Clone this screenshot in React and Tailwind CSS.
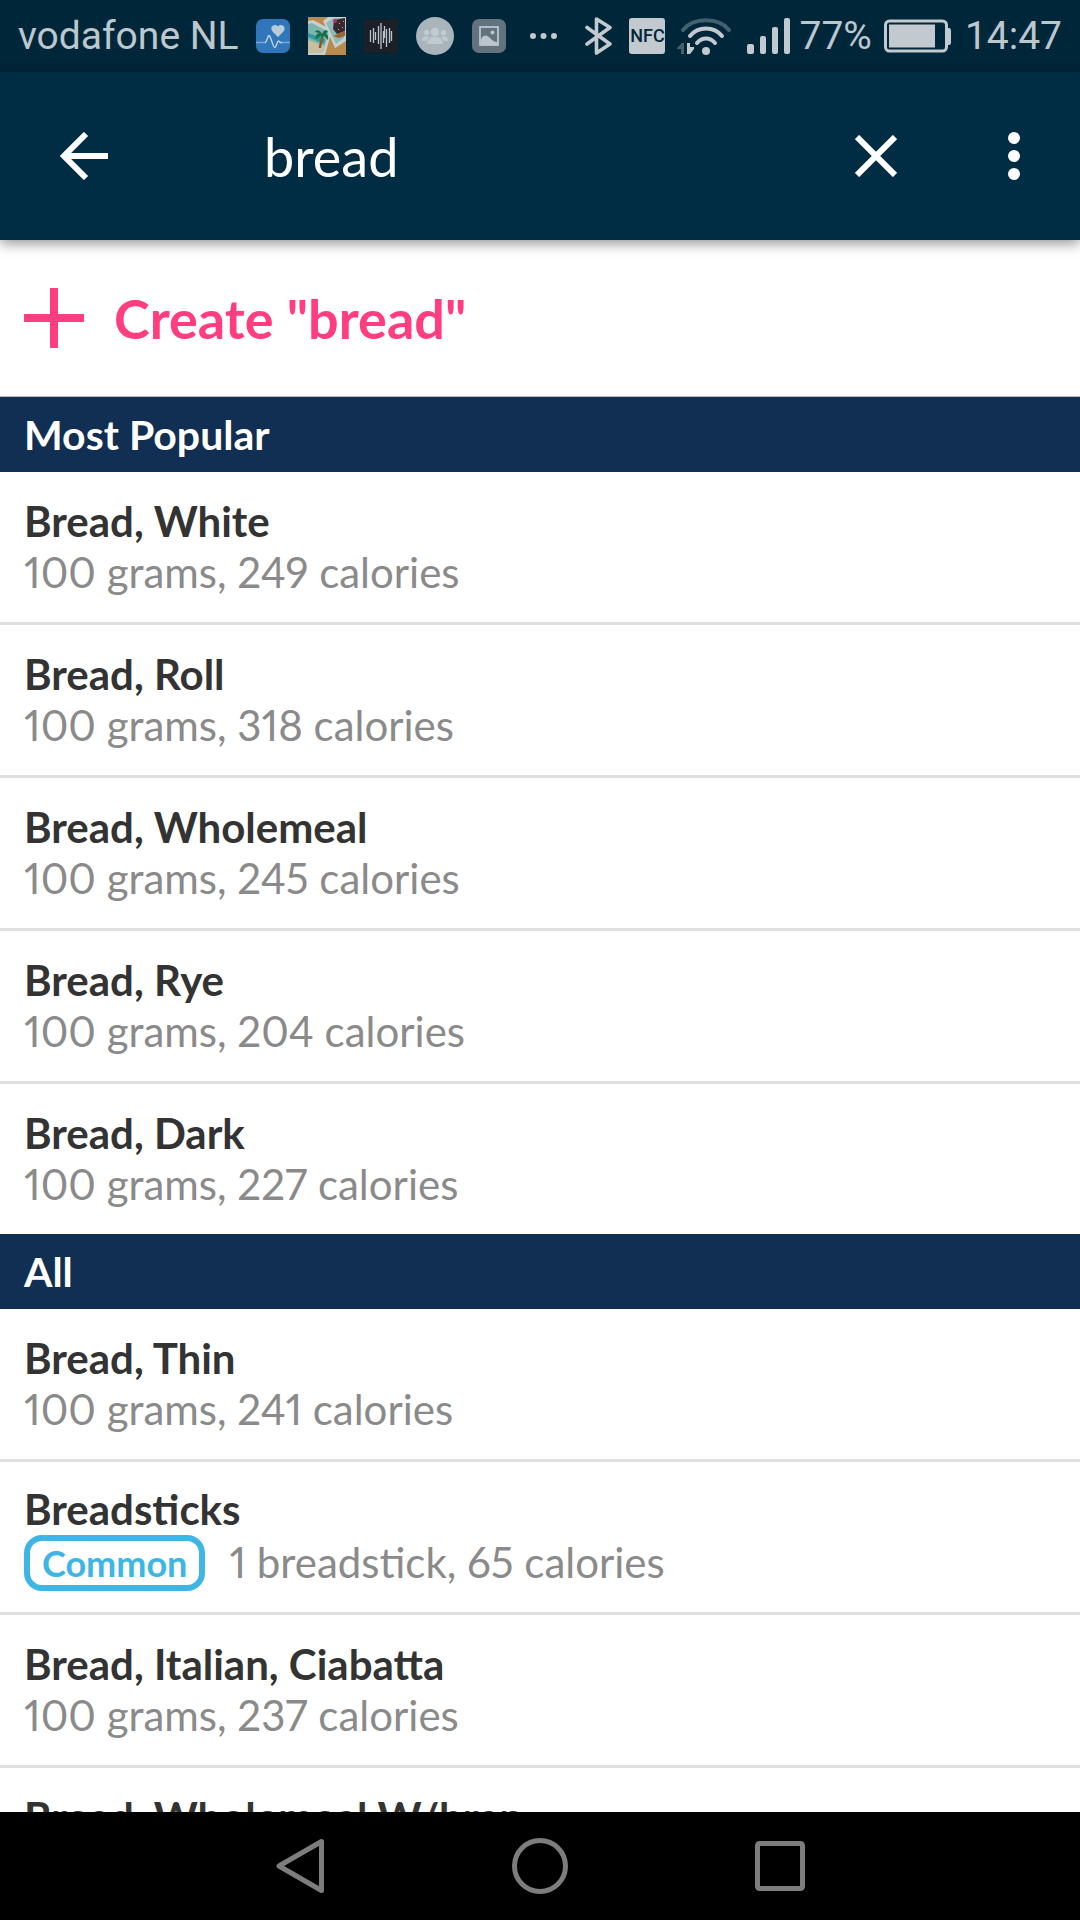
import { useState } from "react";

const popular = [
	{ id: 1, name: "Bread, White", info: "100 grams, 249 calories" },
	{ id: 2, name: "Bread, Roll", info: "100 grams, 318 calories" },
	{ id: 3, name: "Bread, Wholemeal", info: "100 grams, 245 calories" },
	{ id: 4, name: "Bread, Rye", info: "100 grams, 204 calories" },
	{ id: 5, name: "Bread, Dark", info: "100 grams, 227 calories" },
];

const all = [
	{ id: 6, name: "Bread, Thin", info: "100 grams, 241 calories" },
	{ id: 7, name: "Breadsticks", info: "1 breadstick, 65 calories", common: true },
	{ id: 8, name: "Bread, Italian, Ciabatta", info: "100 grams, 237 calories" },
	{ id: 9, name: "Bread, Wholemeal W/bran", info: "100 grams, 233 calories" },
];

function NotificationIcons() {
	return (
		<div className="flex items-center gap-[18px]">
			<svg width="34" height="34" viewBox="0 0 34 34">
				<rect width="34" height="34" rx="7" fill="#2f76bb" />
				<path d="M22 18 L16.500 12.500 C13 8 18.500 3.500 22 7.500 C25.500 3.500 31 8 27.500 12.500 Z" fill="#b9cbd6" />
				<path d="M0 23.500 H10" stroke="#7aa9d4" strokeWidth="1.500" />
				<path d="M25 23.500 H34" stroke="#7aa9d4" strokeWidth="1.500" />
				<path d="M9 23.500 C11 23 12 16 13 16.500 C15 17 17 29 19 28.500 C20.500 28 21 22 22.500 22 C23.500 22 24 24.500 26 23.500" fill="none" stroke="#c8d8e2" strokeWidth="1.300" />
			</svg>
			<svg width="38" height="38" viewBox="0 0 38 38">
				<rect width="38" height="38" fill="#b98a50" />
				<path d="M0 4 L5 3 L24 13 L17 38 H0 Z" fill="#c5d0cf" />
				<path d="M0 7 L4 6 L21 15 L15 35 L0 29 Z" fill="#7fb5b0" />
				<path d="M0 16 L17 22 L16 27 L0 20 Z" fill="#2f9c9a" />
				<path d="M0 23 L17 29 L14 36 H0 Z" fill="#c9bfa0" />
				<path d="M15 4 L20 0 H38 V24 L27 31 Z" fill="#c5d0cf" />
				<path d="M18 6 L26 1 H36 V21 L28 27 Z" fill="#8dbbb5" />
				<path d="M26 3 L37 1 V14 L29 17 L25 12 Z" fill="#3b2730" />
				<circle cx="27" cy="4" r="2" fill="#a8316b" />
				<path d="M31 6h1v1h-1z M34 10h1v1h-1z M30 12h1v1h-1z M35 4h1v1h-1z" fill="#c9b3b3" />
				<path d="M25 19 L37 14 V19 L31 21 Z" fill="#9b6430" />
				<path d="M14 20 C14 24 12 27 12 31" stroke="#8a5a2c" strokeWidth="2.500" fill="none" />
				<path d="M14 17 C11 12 8 13 7 15 L11 16 C8 17 7 20 8 22 L13 19 L14 22 L16 19 L20 23 C21 19 19 17 18 17 L20 14 C17 12 15 14 14 17 Z" fill="#17724a" />
			</svg>
			<svg width="34" height="34" viewBox="0 0 34 34">
				<rect width="34" height="34" fill="#1a2025" />
				<path d="M6.500 11v12 M9.500 9v15 M11.500 13v8 M14.500 7v18 M17 4v26 M19.500 12v12 M20.500 7v12 M22.500 10v18 M25.500 9v15 M27.500 12v10" stroke="#bcc6cd" strokeWidth="1.300" />
			</svg>
			<svg width="38" height="38" viewBox="0 0 38 38">
				<circle cx="19" cy="19" r="19" fill="#a9b5bb" />
				<g fill="#c0cad0">
					<circle cx="10.500" cy="15.500" r="2.800" />
					<circle cx="27.500" cy="15.500" r="2.800" />
					<circle cx="19" cy="15" r="4.200" />
					<path d="M6 24 C6 18.500 11 18.500 13 20 L10 24 Z" />
					<path d="M32 24 C32 18.500 27 18.500 25 20 L28 24 Z" />
					<path d="M11 27 C11 17 27 17 27 27 Z" />
				</g>
			</svg>
			<svg width="34" height="34" viewBox="0 0 34 34">
				<rect width="34" height="34" rx="7" fill="#62737d" />
				<rect x="8" y="8" width="18" height="18" fill="none" stroke="#bcc6cc" strokeWidth="1.800" />
				<circle cx="20.500" cy="13.500" r="2" fill="#bcc6cc" />
				<path d="M9 20 C12 15 15 16 18 19 C21 22 23 23 25 23 V26 H9 Z" fill="#bcc6cc" />
			</svg>
		</div>
	);
}

function StatusBar() {
	return (
		<div className="flex h-[72px] shrink-0 items-center bg-[#002639] px-[18px] font-['Roboto',sans-serif] text-[39px] leading-[48px] whitespace-nowrap text-[#bcc7ce]">
			<span className="mr-[17px]">vodafone NL</span>
			<NotificationIcons />
			<svg className="ml-6" width="28" height="34" viewBox="0 0 28 34" fill="#c2cad0">
				<circle cx="3" cy="17" r="3" />
				<circle cx="13.500" cy="17" r="3" />
				<circle cx="24" cy="17" r="3" />
			</svg>
			<div className="ml-auto flex items-center">
				<svg className="mr-4" width="28" height="38" viewBox="0 0 28 38" fill="none" stroke="#c2cad0" strokeWidth="3.600" strokeLinejoin="round" strokeLinecap="round">
					<path d="M2 10.500 L25 27 L11.500 36 V2 L25 10.500 L2 27" />
				</svg>
				<span className="mr-3 flex h-9 w-9 items-center justify-center rounded-[3px] bg-[#c2cad0] text-[18px] leading-none font-medium text-[#002639]">
					NFC
				</span>
				<svg className="mr-4" width="54" height="38" viewBox="0 0 54 38" fill="none" strokeLinecap="round">
					<path d="M6 13 C16 0 42 0 52 13" stroke="#42606f" strokeWidth="4" />
					<path d="M13 19 C21 9 37 9 45 19" stroke="#c2cad0" strokeWidth="4" />
					<path d="M20 26 C25 20 33 20 38 26" stroke="#c2cad0" strokeWidth="4" />
					<circle cx="29" cy="34" r="4" fill="#c2cad0" />
					<path d="M0 31 L5 26 H7 V37 H4 V32 H0 Z" fill="#42606f" />
					<path d="M10 26 H13 V30 H17 V32 L13 37 H10 Z" fill="#c2cad0" />
				</svg>
				<svg className="mr-2" width="44" height="36" viewBox="0 0 44 36" fill="#c2cad0">
					<rect x="0" y="26" width="7" height="10" rx="2" />
					<rect x="13" y="18" width="6" height="18" rx="2" />
					<rect x="25" y="9" width="6" height="27" rx="2" />
					<rect x="37" y="0" width="6" height="36" rx="2" />
				</svg>
				<span className="mr-3">77%</span>
				<svg className="mr-[13px]" width="68" height="34" viewBox="0 0 68 34">
					<rect x="1.500" y="2" width="61" height="30" rx="4" fill="none" stroke="#c2cad0" strokeWidth="3" />
					<rect x="5" y="5.500" width="46" height="23" fill="#c2cad0" />
					<path d="M63 9 H65 Q67 9 67 12 V23 Q67 26 65 26 H63 Z" fill="#c2cad0" />
				</svg>
				<span>14:47</span>
			</div>
		</div>
	);
}

function AppBar({ query, onChange }) {
	return (
		<header className="relative z-10 flex h-[168px] shrink-0 items-center bg-[#002d43] pr-[42px] pl-12 text-white shadow-[0_4px_12px_rgba(0,0,0,0.4)]">
			<button aria-label="Back" className="flex h-[72px] w-[72px] items-center justify-center">
				<svg width="48" height="48" viewBox="0 0 48 48" fill="none" stroke="currentColor" strokeWidth="6">
					<path d="M26 2 L4 24 L26 46 M4 24 H48" />
				</svg>
			</button>
			<input
				type="text"
				aria-label="Search food"
				value={query}
				onChange={(e) => onChange(e.target.value)}
				className="ml-36 h-[72px] min-w-0 flex-1 bg-transparent text-[54px] outline-none"
			/>
			<button aria-label="Clear" className="flex h-[72px] w-[72px] items-center justify-center" onClick={() => onChange("")}>
				<svg width="42" height="42" viewBox="0 0 42 42" fill="none" stroke="currentColor" strokeWidth="6">
					<path d="M2 2 L40 40 M40 2 L2 40" />
				</svg>
			</button>
			<button aria-label="More options" className="ml-[78px] flex h-[72px] w-12 items-center justify-center">
				<svg width="12" height="48" viewBox="0 0 12 48" fill="currentColor">
					<circle cx="6" cy="6" r="6" />
					<circle cx="6" cy="24" r="6" />
					<circle cx="6" cy="42" r="6" />
				</svg>
			</button>
		</header>
	);
}

function SectionTitle({ children }) {
	return (
		<h2 className="flex h-[75px] items-center bg-[#112f52] px-6 text-[41px] leading-[51px] font-bold text-white">
			{children}
		</h2>
	);
}

function FoodRow({ food }) {
	return (
		<li className="flex h-[153px] flex-col justify-center border-b-3 border-[#e0e0e0] px-6 text-[42px] leading-[51px] last:h-[150px] last:border-b-0">
			<p className="font-bold text-[#333333]">{food.name}</p>
			<div className="flex items-center gap-6 text-[#8a8a8a] proportional-nums">
				{food.common && (
					<span className="flex h-14 items-center rounded-[18px] border-6 border-[#3db6e6] px-3 text-[36px] leading-none font-bold text-[#3db6e6]">
						Common
					</span>
				)}
				<span>{food.info}</span>
			</div>
		</li>
	);
}

function NavBar() {
	return (
		<nav className="flex h-[108px] shrink-0 justify-center bg-black text-[#7d7d7d]">
			<div className="grid w-2/3 grid-cols-3">
				<button aria-label="Back" className="flex items-center justify-center">
					<svg width="48" height="56" viewBox="0 0 48 56" fill="none" stroke="currentColor" strokeWidth="5" strokeLinejoin="round">
						<path d="M45.500 3.500 V52.500 L3 28 Z" />
					</svg>
				</button>
				<button aria-label="Home" className="flex items-center justify-center">
					<svg width="56" height="56" viewBox="0 0 56 56" fill="none" stroke="currentColor" strokeWidth="5">
						<circle cx="28" cy="28" r="25.500" />
					</svg>
				</button>
				<button aria-label="Recent apps" className="flex items-center justify-center">
					<svg width="50" height="50" viewBox="0 0 50 50" fill="none" stroke="currentColor" strokeWidth="5">
						<rect x="2.500" y="2.500" width="45" height="45" rx="2" />
					</svg>
				</button>
			</div>
		</nav>
	);
}

function App() {
	const [query, setQuery] = useState("bread");

	return (
		<div className="flex h-screen flex-col overflow-hidden bg-white font-['Lato',sans-serif]">
			<StatusBar />
			<AppBar query={query} onChange={setQuery} />
			<main className="min-h-0 flex-1 overflow-hidden">
				<button className="flex h-[157px] w-full items-center gap-[30px] border-b border-[#b8bcc4] px-6 text-[54px] font-bold text-[#ff3d80]">
					<svg width="60" height="60" viewBox="0 0 60 60" stroke="currentColor" strokeWidth="8">
						<path d="M30 0 V60 M0 30 H60" />
					</svg>
					<span>Create "{query}"</span>
				</button>
				<SectionTitle>Most Popular</SectionTitle>
				<ul>
					{popular.map((f) => (
						<FoodRow key={f.id} food={f} />
					))}
				</ul>
				<SectionTitle>All</SectionTitle>
				<ul>
					{all.map((f) => (
						<FoodRow key={f.id} food={f} />
					))}
				</ul>
			</main>
			<NavBar />
		</div>
	);
}

export default App;
